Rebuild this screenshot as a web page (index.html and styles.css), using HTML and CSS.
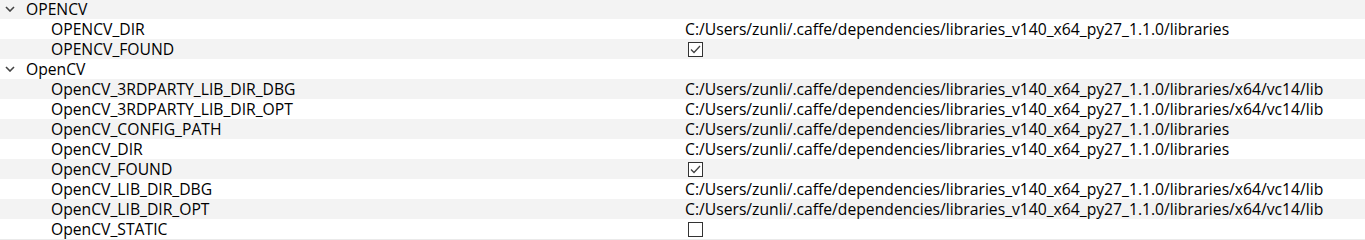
FILE: index.html
```html
<!DOCTYPE html>
<html lang="en">
<head>
<meta charset="UTF-8">
<title>CMake Cache</title>
<link rel="stylesheet" href="styles.css">
</head>
<body>

<!-- Cache entries -->
<div class="tree">
  <div class="row group">
    <div class="name"><svg class="chev" width="10" height="6" viewBox="0 0 10 6"><path d="M1 1 L5 5 L9 1" fill="none" stroke="#444" stroke-width="1.6"/></svg>OPENCV</div>
    <div class="value"></div>
  </div>
  <div class="row">
    <div class="name">OPENCV_DIR</div>
    <div class="value">C:/Users/zunli/.caffe/dependencies/libraries_v140_x64_py27_1.1.0/libraries</div>
  </div>
  <div class="row">
    <div class="name">OPENCV_FOUND</div>
    <div class="value"><span class="check on"><svg width="11" height="9" viewBox="0 0 11 9"><path d="M1 4.5 L4 7.5 L10 1" fill="none" stroke="#444" stroke-width="1.3"/></svg></span></div>
  </div>
  <div class="row group">
    <div class="name"><svg class="chev" width="10" height="6" viewBox="0 0 10 6"><path d="M1 1 L5 5 L9 1" fill="none" stroke="#444" stroke-width="1.6"/></svg>OpenCV</div>
    <div class="value"></div>
  </div>
  <div class="row">
    <div class="name">OpenCV_3RDPARTY_LIB_DIR_DBG</div>
    <div class="value">C:/Users/zunli/.caffe/dependencies/libraries_v140_x64_py27_1.1.0/libraries/x64/vc14/lib</div>
  </div>
  <div class="row">
    <div class="name">OpenCV_3RDPARTY_LIB_DIR_OPT</div>
    <div class="value">C:/Users/zunli/.caffe/dependencies/libraries_v140_x64_py27_1.1.0/libraries/x64/vc14/lib</div>
  </div>
  <div class="row">
    <div class="name">OpenCV_CONFIG_PATH</div>
    <div class="value">C:/Users/zunli/.caffe/dependencies/libraries_v140_x64_py27_1.1.0/libraries</div>
  </div>
  <div class="row">
    <div class="name">OpenCV_DIR</div>
    <div class="value">C:/Users/zunli/.caffe/dependencies/libraries_v140_x64_py27_1.1.0/libraries</div>
  </div>
  <div class="row">
    <div class="name">OpenCV_FOUND</div>
    <div class="value"><span class="check on"><svg width="11" height="9" viewBox="0 0 11 9"><path d="M1 4.5 L4 7.5 L10 1" fill="none" stroke="#444" stroke-width="1.3"/></svg></span></div>
  </div>
  <div class="row">
    <div class="name">OpenCV_LIB_DIR_DBG</div>
    <div class="value">C:/Users/zunli/.caffe/dependencies/libraries_v140_x64_py27_1.1.0/libraries/x64/vc14/lib</div>
  </div>
  <div class="row">
    <div class="name">OpenCV_LIB_DIR_OPT</div>
    <div class="value">C:/Users/zunli/.caffe/dependencies/libraries_v140_x64_py27_1.1.0/libraries/x64/vc14/lib</div>
  </div>
  <div class="row">
    <div class="name">OpenCV_STATIC</div>
    <div class="value"><span class="check"></span></div>
  </div>
</div>

</body>
</html>
```

FILE: styles.css
```css
body {
  margin: 0;
  font-family: "Open Sans", "Noto Sans", sans-serif;
  font-size: 15.7px;
  color: #000;
  background-color: #fff;
}

/* Cache tree */
.tree {
  margin-top: -1px;
  border-bottom: 1px solid #eaeaea;
}

.row {
  display: grid;
  grid-template-columns: 685px 1fr;
  height: 20px;
  line-height: 20px;
  white-space: nowrap;
}

.row:nth-child(odd) {
  background-color: #f3f3f3;
}

.name {
  padding-left: 51px;
}

.group .name {
  padding-left: 5px;
  display: flex;
  align-items: center;
}

.chev {
  margin-right: 11px;
}

.value {
  display: flex;
  align-items: center;
}

/* Checkbox */
.check {
  width: 13px;
  height: 13px;
  margin-left: 3px;
  border: 1px solid #333;
  background-color: #fff;
  display: flex;
  align-items: center;
  justify-content: center;
}
```
